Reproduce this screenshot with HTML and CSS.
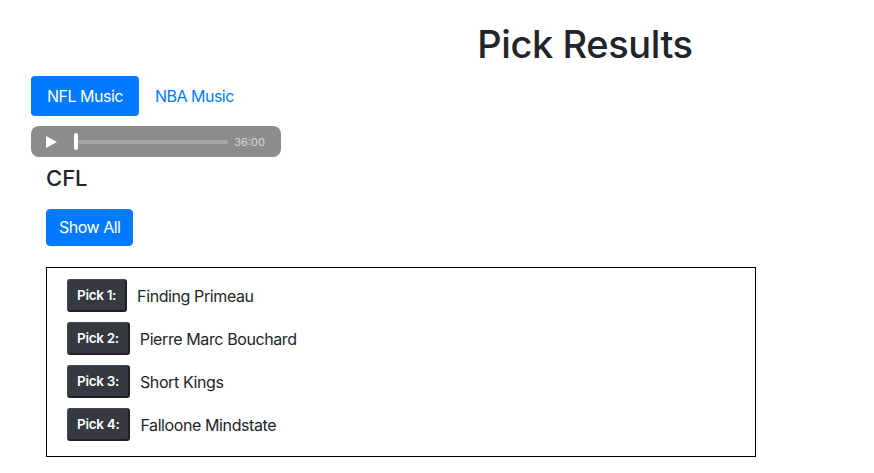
FILE: index.html
```html
<!DOCTYPE html>
<html>
<head>
<meta charset="utf-8">
<link rel="stylesheet" href="styles.css">
</head>
<body>
<header class="title-bar"><h1 class="title">Pick Results</h1></header>
<nav class="nav">
  <a class="nav-link active">NFL Music</a>
  <a class="nav-link">NBA Music</a>
</nav>
<div class="player">
  <svg class="play" width="14" height="14" viewBox="0 0 14 14"><path d="M2 1 L13 7 L2 13 Z" fill="#fff"/></svg>
  <div class="track"><span class="thumb"></span><span class="bar"></span></div>
  <span class="time">36:00</span>
</div>
<main class="content">
  <h4 class="league">CFL</h4>
  <button class="btn">Show All</button>
  <section class="picks">
    <div class="pick"><span class="badge">Pick 1:</span><span class="name">Finding Primeau</span></div>
    <div class="pick"><span class="badge">Pick 2:</span><span class="name">Pierre Marc Bouchard</span></div>
    <div class="pick"><span class="badge">Pick 3:</span><span class="name">Short Kings</span></div>
    <div class="pick"><span class="badge">Pick 4:</span><span class="name">Falloone Mindstate</span></div>
  </section>
</main>
</body>
</html>
```
FILE: styles.css
```css
* { box-sizing: border-box; }
body {
  margin: 0;
  font-family: Inter, "Liberation Sans", sans-serif;
  color: #212529;
  background: #fff;
}
.title-bar {
  display: flex;
  justify-content: center;
  padding-left: 296px;
  padding-top: 21px;
}
.title {
  margin: 0;
  font-size: 38px;
  font-weight: 500;
  line-height: 47px;
  letter-spacing: -0.4px;
}
.nav {
  display: flex;
  margin: 8px 0 0 31px;
}
.nav-link {
  display: block;
  padding: 8px 16px;
  font-size: 16px;
  line-height: 24px;
  color: #007bff;
  border-radius: 4px;
  letter-spacing: -0.5px;
}
.nav-link.active {
  background: #007bff;
  color: #fff;
}
.player {
  display: flex;
  align-items: center;
  width: 250px;
  height: 31px;
  margin: 10px 0 0 31px;
  padding: 0 16px 0 13px;
  background: #8c8c8c;
  border-radius: 8px;
}
.play { flex: none; }
.track {
  flex: 1;
  display: flex;
  align-items: center;
  margin-left: 16px;
}
.thumb {
  width: 4px;
  height: 17px;
  background: #fff;
  border-radius: 2px;
}
.bar {
  flex: 1;
  height: 4px;
  background: #a6a6a6;
  border-radius: 2px;
}
.time {
  margin-left: 6px;
  font-size: 11px;
  color: #d6d6d6;
}
.content {
  padding-left: 46px;
  padding-right: 118px;
}
.league {
  margin: 7px 0 0;
  font-size: 22px;
  font-weight: 500;
  line-height: 28px;
}
.btn {
  display: block;
  margin-top: 17px;
  padding: 6px 12px;
  font-family: inherit;
  font-size: 16px;
  line-height: 23px;
  color: #fff;
  background: #007bff;
  border: 1px solid #007bff;
  border-radius: 4px;
  letter-spacing: -0.5px;
}
.picks {
  margin-top: 21px;
  border: 1px solid #000;
  padding: 11px 20px 15px;
  display: flex;
  flex-direction: column;
  gap: 10px;
}
.pick {
  display: flex;
  align-items: center;
}
.badge {
  display: inline-block;
  height: 33px;
  padding: 0 9px;
  line-height: 31px;
  font-size: 13.5px;
  font-weight: 600;
  letter-spacing: -0.3px;
  color: #fff;
  background: #343a40;
  border-top: 1px solid #444b52;
  border-left: 1px solid #444b52;
  border-right: 2px solid #1d2024;
  border-bottom: 2px solid #1d2024;
  border-radius: 3px;
}
.name {
  margin-left: 10px;
  font-size: 16px;
  letter-spacing: -0.4px;
}
```
